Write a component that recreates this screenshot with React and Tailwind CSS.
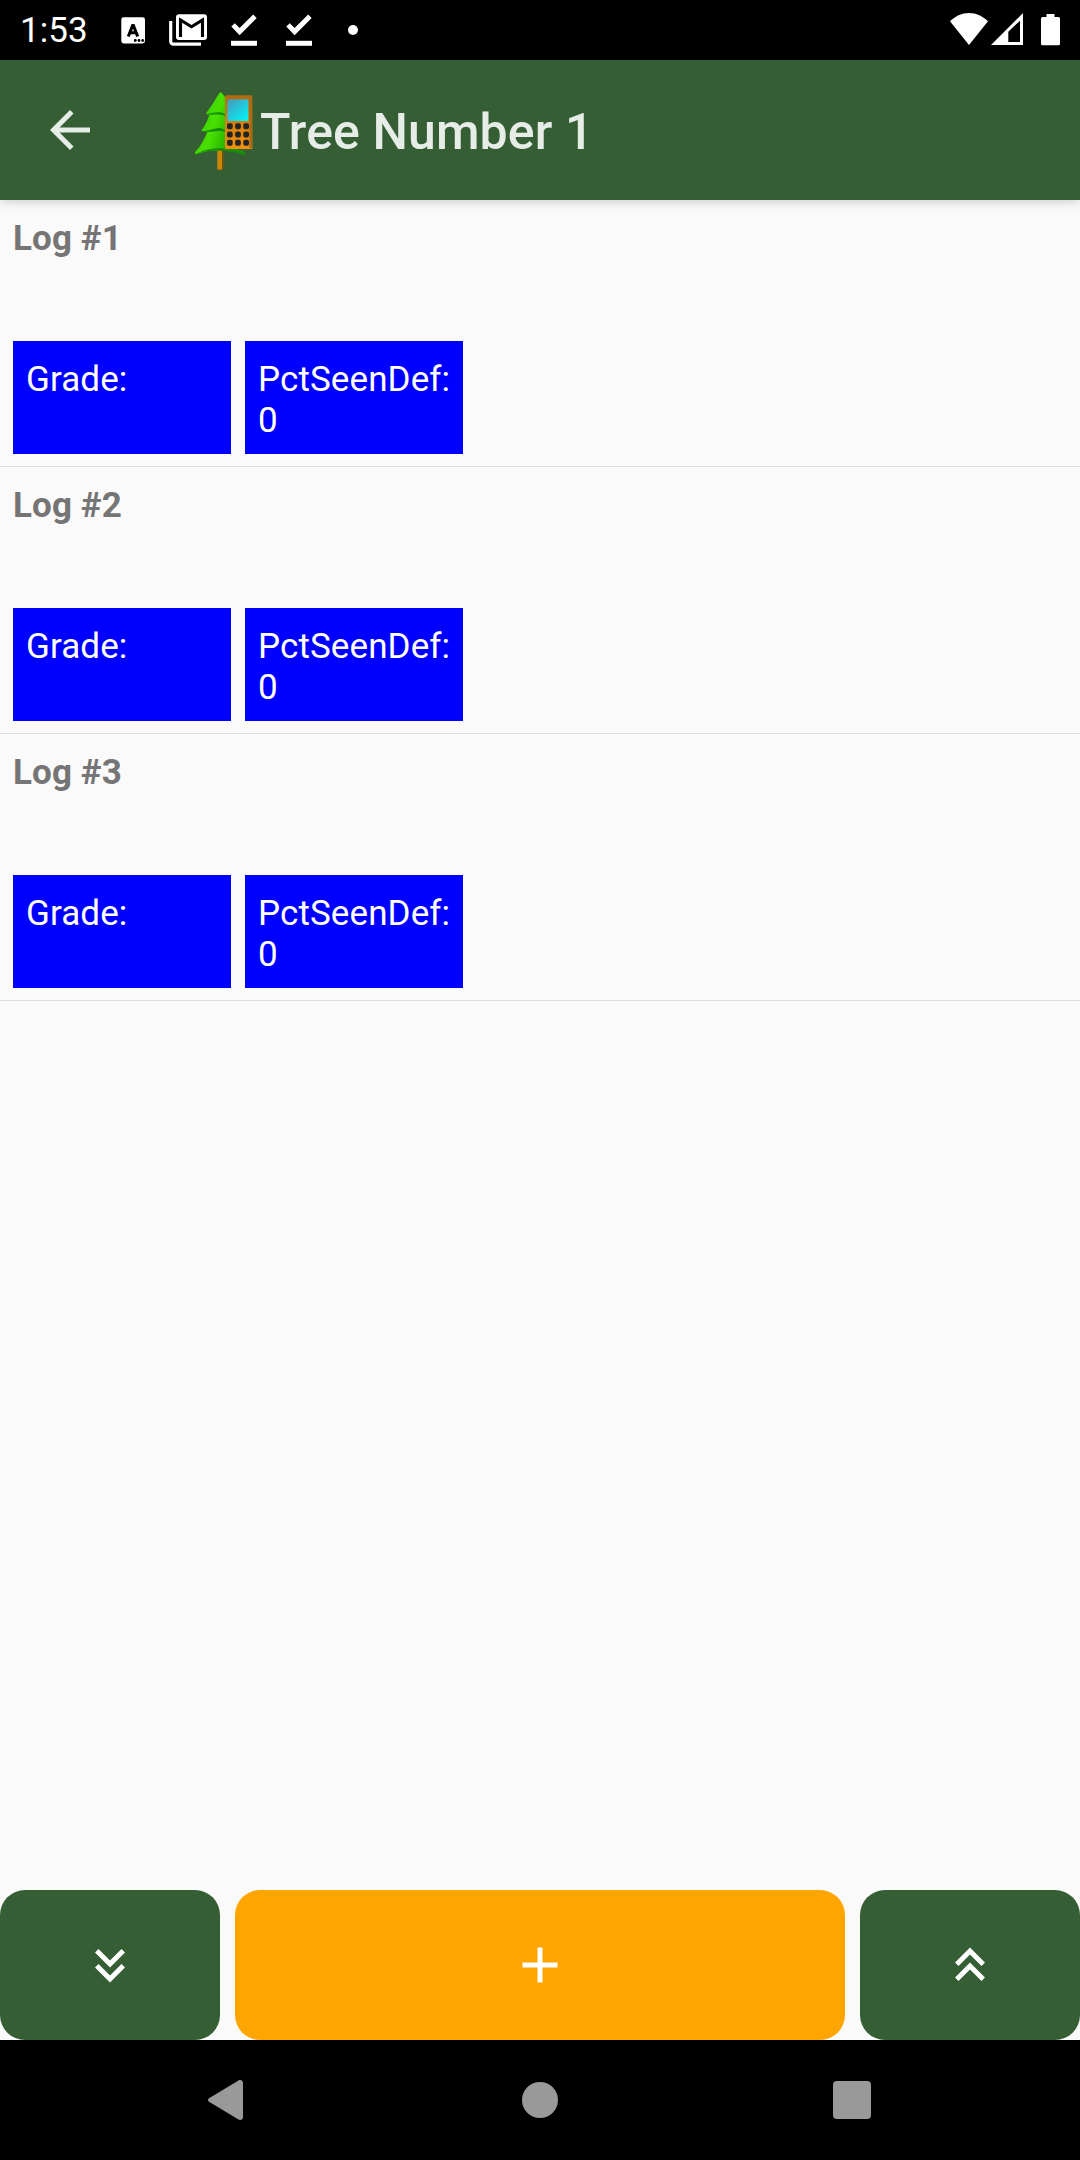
const logs = [
  { id: 1, grade: "", pct: 0 },
  { id: 2, grade: "", pct: 0 },
  { id: 3, grade: "", pct: 0 },
];

function DownloadDone() {
  return (
    <svg width="26" height="60" viewBox="0 0 26 60" fill="#fff">
      <path d="M0.3 26.6 3.8 23.2 8.6 28 22.2 14.4 25.7 18 8.6 35.2Z" />
      <path d="M0 40.8h26v5H0z" />
    </svg>
  );
}

function StatusBar() {
  return (
    <header className="flex h-[60px] shrink-0 items-center bg-black text-white">
      <span className="ml-[20px] mt-[2px] w-[101px] whitespace-nowrap text-[35px] leading-[60px] tracking-[0.1px]">1:53</span>
      <svg width="24" height="60" viewBox="0 0 24 60">
        <rect x="0.3" y="17.2" width="23.7" height="26.3" rx="2.4" fill="#fff" />
        <path d="M7.3 36.5 12 24.5 16.7 36.5M8.8 32.8h6.4" fill="none" stroke="#000" strokeWidth="3.1" strokeLinejoin="bevel" />
        <g fill="#000">
          <circle cx="14.3" cy="40.5" r="1.4" />
          <circle cx="18" cy="40.5" r="1.4" />
          <circle cx="21.7" cy="40.5" r="1.4" />
        </g>
      </svg>
      <svg className="ml-[24px]" width="38" height="60" viewBox="0 0 38 60">
        <path d="M1.7 21v20.5a2.6 2.6 0 0 0 2.6 2.6H32" fill="none" stroke="#fff" strokeWidth="3.2" />
        <rect x="7" y="14.3" width="31" height="25.6" rx="3" fill="#fff" />
        <path d="M11.5 37V20L22.5 26.7 33.5 20V37" fill="none" stroke="#000" strokeWidth="3.1" />
      </svg>
      <div className="ml-[24px] flex gap-[29px]">
        <DownloadDone />
        <DownloadDone />
      </div>
      <div className="ml-[36px] h-[10px] w-[10px] rounded-full bg-white" />
      <svg className="ml-auto" width="38" height="60" viewBox="0 0 38 60" fill="#fff">
        <path d="M19 45 0 21.3C5 16.5 12 13 19 13s14 3.5 19 8.3Z" />
      </svg>
      <svg className="ml-[3px]" width="32" height="60" viewBox="0 0 32 60" fill="#fff">
        <path fillRule="evenodd" d="M0 45 32 13V45ZM17.3 31.8V42H29V20.7Z" />
      </svg>
      <svg className="ml-[18px] mr-[20px]" width="19" height="60" viewBox="0 0 19 60" fill="#fff">
        <path d="M5.5 13.9h8V17h4a1.5 1.5 0 0 1 1.5 1.5v25.2a1.5 1.5 0 0 1-1.5 1.5h-16A1.5 1.5 0 0 1 0 43.7V18.5A1.5 1.5 0 0 1 1.5 17h4z" />
      </svg>
    </header>
  );
}

function TreeLogo() {
  const keys = [0, 1, 2];
  return (
    <svg className="ml-[80px]" width="78" height="100" viewBox="0 0 234 300">
      <defs>
        <linearGradient id="leaf" x1="0" y1="0" x2="1" y2="0.4">
          <stop offset="0" stopColor="#2fc400" />
          <stop offset="0.5" stopColor="#48e000" />
          <stop offset="1" stopColor="#159b00" />
        </linearGradient>
        <linearGradient id="screen" x1="0" y1="0" x2="0.8" y2="1">
          <stop offset="0" stopColor="#4897b8" />
          <stop offset="1" stopColor="#05f0f5" />
        </linearGradient>
        <linearGradient id="case" x1="0" y1="0" x2="0" y2="1">
          <stop offset="0" stopColor="#b06a0c" />
          <stop offset="0.5" stopColor="#d47f0a" />
          <stop offset="1" stopColor="#f09010" />
        </linearGradient>
        <filter id="soft">
          <feGaussianBlur stdDeviation="1.6" />
        </filter>
      </defs>
      <g filter="url(#soft)">
        <path d="M112 200h17v69h-17z" fill="#cf8506" />
        <path d="M126 205h7v64h-7z" fill="#5c5a18" />
        <path
          d="M120 37c5 0 12 8 18 22v136l56 20c3 6 0 10-4 10-18-10-60-15-92-13-22 2-40 6-50 11-4-1-4-5-1-9 14-14 27-38 35-59-6-2-14 0-18-3 9-12 18-27 24-47-4-2-8-1-10-5C94 80 108 54 120 37Z"
          fill="url(#leaf)"
        />
        <path d="M82 102c12-3 28-6 38-5s10 4 16 5v7c-14-7-26-5-46-5zM68 154c22-3 38-10 52-10l16 5v7c-20-7-34-1-54 0z" fill="#198c08" />
        <path d="M50 221c24-14 58-18 90-16l54 12c3 5-1 8-5 7-22-8-46-12-70-12-26-1-46 3-69 9Z" fill="#168c08" />
        <rect x="135" y="46" width="82" height="161" rx="3" fill="url(#case)" />
        <path d="M208 50h8v154h-8z" fill="#a96a18" />
        <rect x="142" y="58" width="63" height="65" fill="url(#screen)" />
        {keys.map((r) =>
          keys.map((c) => (
            <rect key={r + "-" + c} x={141 + c * 24.5} y={129.5 + r * 25} width="17" height="18" rx="6" fill="#242022" />
          ))
        )}
      </g>
    </svg>
  );
}

function AppBar() {
  return (
    <div className="z-10 flex h-[140px] shrink-0 items-center bg-[#355e35] shadow-[0_2px_10px_rgba(0,0,0,0.18)]">
      <svg className="ml-[40px]" width="60" height="60" viewBox="0 0 24 24" fill="#e6ece6">
        <path d="M20 11H7.83l5.59-5.59L12 4l-8 8 8 8 1.410-1.410L7.83 13H20v-2z" />
      </svg>
      <TreeLogo />
      <h1 className="ml-[2px] mt-[4px] whitespace-nowrap text-[50px] font-medium leading-[60px] tracking-[0.1px] text-[#e6ece6]">Tree Number 1</h1>
    </div>
  );
}

function Field({ label, value }) {
  return (
    <div className="h-[113px] w-[218px] bg-[#0000ff] pl-[13px] pt-[18px] text-[35px] leading-[41px] tracking-[0.1px] text-white">
      <div className="whitespace-nowrap">{label}:</div>
      <div>{value}</div>
    </div>
  );
}

function LogRow({ log }) {
  return (
    <li className="flex h-[267px] flex-col border-b border-[#dcdcdc] pl-[13px]">
      <h2 className="mt-[18px] h-[123px] text-[35px] font-bold leading-[41px] tracking-[0.1px] text-[#757575]">Log #{log.id}</h2>
      <div className="flex gap-[14px]">
        <Field label="Grade" value={log.grade} />
        <Field label="PctSeenDef" value={log.pct} />
      </div>
    </li>
  );
}

function DoubleChevron() {
  return (
    <path d="M18 7 16.59 5.59 12 10.17 7.41 5.59 6 7l6 6zM18 13 16.59 11.59 12 16.17 7.41 11.59 6 13l6 6z" />
  );
}

export default function App() {
  return (
    <div className="flex h-[2160px] w-[1080px] flex-col overflow-hidden bg-[#fafafa] font-['Roboto',sans-serif]">
      <StatusBar />
      <AppBar />
      <ul className="flex-1">
        {logs.map((log) => (
          <LogRow key={log.id} log={log} />
        ))}
      </ul>
      <div className="flex h-[150px] shrink-0 gap-[15px]">
        <button className="flex w-[220px] items-center justify-center rounded-[25px] bg-[#355e35]">
          <svg width="60" height="60" viewBox="0 0 24 24" fill="#fff">
            <DoubleChevron />
          </svg>
        </button>
        <button className="flex flex-1 items-center justify-center rounded-[25px] bg-[#ffa500]">
          <svg width="60" height="60" viewBox="0 0 24 24" fill="#fff">
            <path d="M19 13h-6v6h-2v-6H5v-2h6V5h2v6h6v2z" />
          </svg>
        </button>
        <button className="flex w-[220px] items-center justify-center rounded-[25px] bg-[#355e35]">
          <svg className="rotate-180" width="60" height="60" viewBox="0 0 24 24" fill="#fff">
            <DoubleChevron />
          </svg>
        </button>
      </div>
      <nav className="flex h-[120px] shrink-0 items-center bg-black">
        <svg className="ml-[207px]" width="37" height="42" viewBox="0 0 37 42" fill="#999">
          <path d="M2 19.2 31.5 1.4C33.5 0.3 36 1.3 36 4V38c0 2.7-2.5 3.7-4.5 2.6L2 22.8c-1.3-.8-1.3-2.8 0-3.6Z" />
        </svg>
        <div className="ml-[278px] h-[36px] w-[36px] rounded-full bg-[#999]" />
        <div className="ml-[275px] h-[38px] w-[38px] rounded-[4px] bg-[#999]" />
      </nav>
    </div>
  );
}
